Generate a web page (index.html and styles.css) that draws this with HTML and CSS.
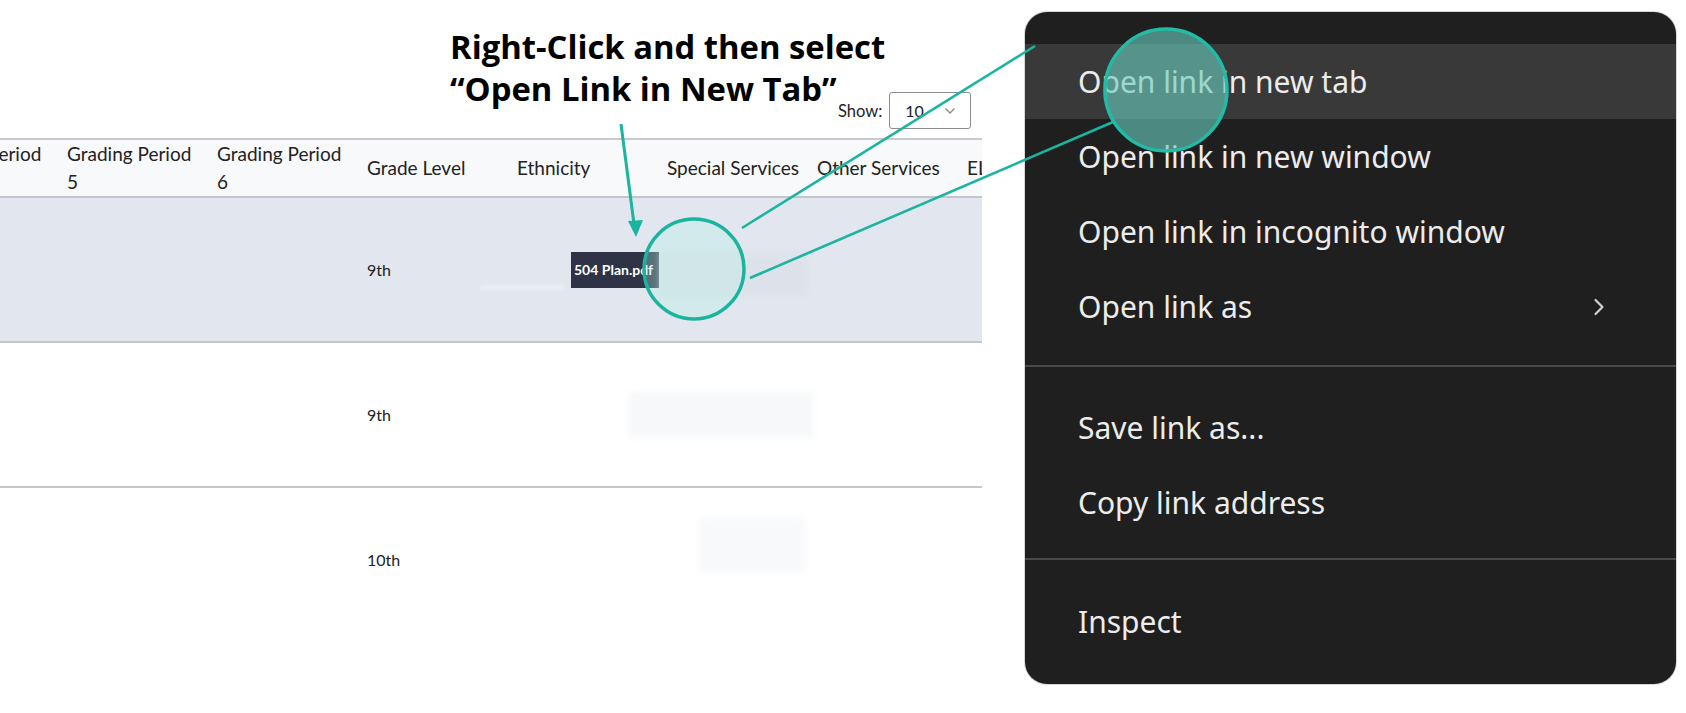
FILE: index.html
```html
<!DOCTYPE html>
<html lang="en">
<head>
<meta charset="utf-8">
<title>Open link in new tab</title>
<link rel="stylesheet" href="styles.css">
</head>
<body>
<div class="page">
  <div class="left">
    <div class="toolbar">
      <div class="callout">Right-Click and then select<br>“Open Link in New Tab”</div>
      <div class="show">
        <span class="show-label">Show:</span>
        <div class="select">
          <span>10</span>
          <svg class="select-chev" width="12" height="8" viewBox="0 0 12 8"><path d="M1.5 1.5 L6 6 L10.5 1.5" fill="none" stroke="#8a8a8a" stroke-width="1.3"/></svg>
        </div>
      </div>
    </div>
    <div class="table">
      <div class="row head">
        <div class="cell">Grading Period<br>4</div>
        <div class="cell">Grading Period<br>5</div>
        <div class="cell">Grading Period<br>6</div>
        <div class="cell">Grade Level</div>
        <div class="cell">Ethnicity</div>
        <div class="cell">Special Services</div>
        <div class="cell">Other Services</div>
        <div class="cell">EL</div>
      </div>
      <div class="row body r1">
        <div class="cell"></div>
        <div class="cell"></div>
        <div class="cell"></div>
        <div class="cell">9th</div>
        <div class="cell eth"><span class="strip"></span><span class="chip">504 Plan.pdf</span></div>
        <div class="cell"><span class="blur b1"></span></div>
        <div class="cell"></div>
        <div class="cell"></div>
      </div>
      <div class="row body">
        <div class="cell"></div>
        <div class="cell"></div>
        <div class="cell"></div>
        <div class="cell">9th</div>
        <div class="cell"></div>
        <div class="cell"><span class="blur b2"></span></div>
        <div class="cell"></div>
        <div class="cell"></div>
      </div>
      <div class="row body last">
        <div class="cell"></div>
        <div class="cell"></div>
        <div class="cell"></div>
        <div class="cell">10th</div>
        <div class="cell"></div>
        <div class="cell"><span class="blur b3"></span></div>
        <div class="cell"></div>
        <div class="cell"></div>
      </div>
    </div>
  </div>

  <div class="menu">
    <div class="item active">Open link in new tab</div>
    <div class="item">Open link in new window</div>
    <div class="item">Open link in incognito window</div>
    <div class="item">Open link as
      <svg class="chev" width="12" height="18" viewBox="0 0 12 18"><path d="M2.5 2 L9.5 9 L2.5 16" fill="none" stroke="#d0d0d0" stroke-width="2.2" stroke-linecap="round" stroke-linejoin="round"/></svg>
    </div>
    <div class="sep"></div>
    <div class="item">Save link as...</div>
    <div class="item">Copy link address</div>
    <div class="sep sep2"></div>
    <div class="item">Inspect</div>
  </div>

  <svg class="annot" width="1686" height="713" viewBox="0 0 1686 713">
    <line x1="621" y1="124" x2="634" y2="224" stroke="#1ab4a0" stroke-width="3"/>
    <polygon points="636,237 628,221 643,220" fill="#1ab4a0"/>
    <line x1="742" y1="228" x2="1035" y2="46" stroke="#1ab4a0" stroke-width="2.6"/>
    <line x1="750" y1="278" x2="1113" y2="122" stroke="#1ab4a0" stroke-width="2.6"/>
    <circle cx="694" cy="269" r="50" fill="rgba(180,240,230,0.32)" stroke="#1db49f" stroke-width="3.5"/>
    <circle cx="1166" cy="90" r="61" fill="rgba(105,205,190,0.62)" stroke="#22bba5" stroke-width="3.5"/>
  </svg>
</div>
</body>
</html>
```
FILE: styles.css
```css
* { box-sizing: border-box; }

html, body {
  margin: 0;
  padding: 0;
  background: #ffffff;
}

body {
  font-family: "Lato", "Liberation Sans", sans-serif;
  color: #222;
}

.page {
  position: relative;
  width: 1686px;
  height: 713px;
  display: flex;
  overflow: hidden;
}

.left {
  width: 982px;
  flex: none;
  display: flex;
  flex-direction: column;
}

/* toolbar with callout and "Show" */
.toolbar {
  height: 138px;
  display: flex;
  align-items: flex-start;
  padding: 26px 0 0 450px;
}

.callout {
  flex: none;
  width: 388px;
  white-space: nowrap;
  font-family: "Open Sans", "Liberation Sans", sans-serif;
  font-weight: 700;
  font-size: 32.8px;
  line-height: 42px;
  color: #000;
}

.show {
  align-self: flex-end;
  margin-bottom: 9px;
  display: flex;
  align-items: center;
  gap: 7px;
}

.show-label {
  font-size: 16.5px;
  color: #222;
}

.select {
  width: 82px;
  height: 37px;
  border: 1px solid #8c8c8c;
  border-radius: 3px;
  display: flex;
  align-items: center;
  justify-content: space-between;
  padding: 0 14px 0 15px;
  font-size: 16px;
  color: #222;
  background: #fff;
}

/* table */
.table {
  width: 982px;
  overflow: hidden;
  flex: none;
}

.row {
  display: grid;
  grid-template-columns: repeat(8, 150px);
  width: 1200px;
  margin-left: -83px;
}

.head {
  height: 60px;
  border-top: 2px solid #c8cacd;
  border-bottom: 2px solid #c3c6cb;
  background: #f8f9fb;
  font-size: 19px;
  line-height: 28px;
  color: #222;
}

.head .cell {
  display: flex;
  align-items: center;
  white-space: nowrap;
}

.body {
  height: 145px;
  border-bottom: 2px solid #c3c6cb;
  font-size: 16px;
}

.body.last {
  border-bottom-color: transparent;
}

.r1 {
  background: #e2e7ef;
}

.body .cell {
  display: flex;
  align-items: center;
}

.eth {
  position: relative;
  padding-left: 54px;
}

.strip {
  position: absolute;
  left: -37px;
  top: 87px;
  width: 84px;
  height: 5px;
  background: #eaeef4;
  filter: blur(1.5px);
}

.chip {
  display: inline-flex;
  align-items: center;
  height: 36px;
  padding: 0 6px 0 3px;
  background: #2e3446;
  color: #fff;
  font-weight: 700;
  font-size: 14px;
  white-space: nowrap;
}

.blur {
  display: block;
  filter: blur(3px);
}

.b1 {
  width: 150px;
  height: 46px;
  margin-left: -8px;
  margin-top: 8px;
  background: #d9dee7;
  opacity: 0.5;
}

.b2 {
  width: 185px;
  height: 46px;
  margin-left: -38px;
  background: #f6f8fa;
}

.b3 {
  width: 107px;
  height: 54px;
  margin-left: 32px;
  margin-top: -30px;
  background: #f8f9fb;
}

/* context menu */
.menu {
  flex: none;
  width: 651px;
  height: 672px;
  margin: 12px 0 0 43px;
  padding-top: 32px;
  background: #1f1f1f;
  border-radius: 22px;
  color: #ececec;
  font-family: "Noto Sans", "Open Sans", sans-serif;
  font-size: 30px;
  display: flex;
  flex-direction: column;
  box-shadow: 0 0 0 1px #d8d8d8;
}

.item {
  height: 75px;
  flex: none;
  display: flex;
  align-items: center;
  padding: 0 71px 0 53px;
  white-space: nowrap;
}

.item.active {
  background: #393939;
}

.chev {
  margin-left: auto;
}

.sep {
  flex: none;
  height: 2px;
  margin: 21px 0 23px;
  background: #4a4a4a;
}

.sep2 {
  margin: 18px 0 24px;
}

/* annotation overlay */
.annot {
  position: absolute;
  left: 0;
  top: 0;
  pointer-events: none;
}
```
